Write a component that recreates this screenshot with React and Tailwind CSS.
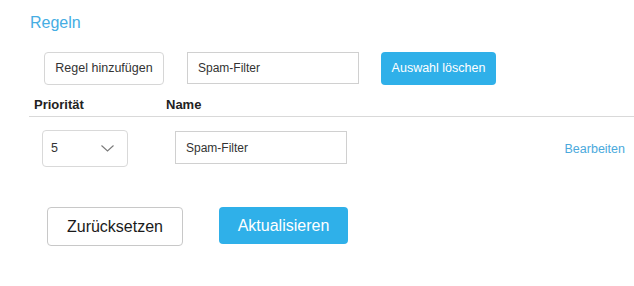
import React from "react";

// Rules overview: toolbar, table header, one rule row and form actions
const rules = [{ id: "1", priority: "5", name: "Spam-Filter" }];

const Chevron = () => (
  <svg width="13" height="7" viewBox="0 0 13 7" fill="none">
    <path d="M0.5 0.5 L6.5 6 L12.5 0.5" stroke="#7a7a7a" strokeWidth="1.1" />
  </svg>
);

const App = () => {
  return (
    <div className="w-[634px] h-[286px] bg-white font-['Liberation_Sans',Arial,sans-serif] text-[#222]">
      <h1 className="pt-[14px] pl-[30px] text-[16px] leading-[18px] text-[#45ade3]">
        Regeln
      </h1>

      <div className="flex items-start mt-[20px]">
        <button className="ml-[44px] w-[120px] h-[33px] rounded-[4px] border border-[#d6d6d6] bg-white text-[12.5px] text-[#333]">
          Regel hinzufügen
        </button>
        <div className="ml-[23px] w-[172px] h-[32px] border border-[#d0d0d0] flex items-center pl-[10px] text-[12px] text-[#333]">
          Spam-Filter
        </div>
        <button className="ml-[22px] w-[115px] h-[33px] rounded-[4px] bg-[#2fb0e9] text-white text-[12.5px]">
          Auswahl löschen
        </button>
      </div>

      <div className="ml-[29px] mt-[12px] pb-[3px] border-b border-[#d9d9d9] flex text-[13px] leading-[16px] font-bold text-[#222]">
        <div className="pl-[5px] w-[137px]">Priorität</div>
        <div>Name</div>
      </div>

      {rules.map((rule) => (
        <div key={rule.id} className="flex items-start mt-[13px]">
          <div className="ml-[42px] w-[86px] h-[37px] rounded-[4px] border border-[#d9d9d9] flex items-center justify-between pl-[8px] pr-[13px] text-[12.5px] text-[#333]">
            <span>{rule.priority}</span>
            <Chevron />
          </div>
          <div className="ml-[47px] mt-[1px] w-[172px] h-[33px] border border-[#d0d0d0] flex items-center pl-[10px] text-[12px] text-[#333]">
            {rule.name}
          </div>
          <a className="ml-auto mr-[9px] mt-[11px] text-[12.5px] leading-[16px] text-[#4aa9dc]">
            Bearbeiten
          </a>
        </div>
      ))}

      <div className="flex items-start mt-[40px]">
        <button className="ml-[47px] w-[136px] h-[39px] rounded-[4px] border border-[#c8c8c8] bg-white text-[16px] text-[#1a1a1a]">
          Zurücksetzen
        </button>
        <button className="ml-[36px] w-[129px] h-[37px] rounded-[4px] bg-[#2fb0e9] text-white text-[16px]">
          Aktualisieren
        </button>
      </div>
    </div>
  );
};

export default App;
